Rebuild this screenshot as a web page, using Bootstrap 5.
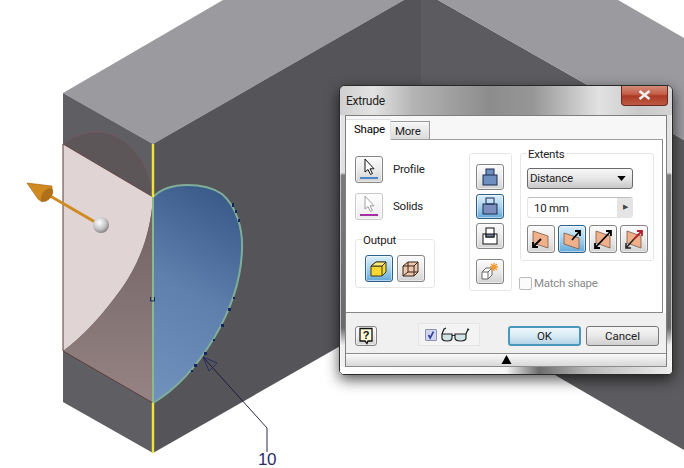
<!DOCTYPE html>
<html lang="en">
<head>
  <meta charset="UTF-8">
  <meta name="viewport" content="width=device-width, initial-scale=1.0">
  <title>Extrude</title>
  <link href="https://cdn.jsdelivr.net/npm/bootstrap@5.3.2/dist/css/bootstrap.min.css" rel="stylesheet">
  <style>
    body { margin: 0; background: #fff; overflow: hidden; width: 684px; height: 468px; font-family: Roboto, "Liberation Sans", sans-serif; font-size: 11.5px; letter-spacing: -.25px; color: #222; }
    .scene { position: absolute; left: 0; top: 0; }
    .win { position: absolute; left: 339px; top: 85px; width: 334px; height: 290px; border: 1px solid #2a2a2a; border-radius: 6px 6px 5px 5px; box-shadow: 0 5px 14px rgba(0,0,0,.65), inset 0 0 0 1px rgba(255,255,255,.55); background: linear-gradient(180deg, #e4e4e4 0, #e0e0e0 30%, #7b7b7b 31%, #6a6a6a 84%, #efefef 90%, #f2f2f2 100%); overflow: hidden; }
    .win-title { height: 29px; padding-left: 6px; font-size: 12px; background: linear-gradient(90deg, #cfcfcf 0, #e3e3e3 10%, #b4b4b4 22%, #8c8c8c 45%, #969696 58%, #e2e2e2 78%, #c9c9c9 90%, #d4d4d4 100%); }
    .win-close { width: 47px; height: 21px; margin: -1px 4px 0 0; padding: 0; border: 1px solid #6b2a20; border-top: 0; border-radius: 0 0 4px 4px; background: linear-gradient(180deg, #d4907c 0, #c4604a 45%, #ac3a26 55%, #bd5a44 100%); line-height: 1; }
    .win-client { margin: 0 5px; height: 252px; border: 1px solid #7f7f7f; border-bottom: 0; background: #fff; }
    .dlg-tabs { height: 23px; padding-top: 3px; border: 0; background: #f7f7f7; }
    .dlg-tabs .nav-link { height: 21px; padding: 0 0 0 8px; width: 45px; margin: 0; border: 1px solid #9b9b9b; border-bottom: 0; border-left: 0; border-radius: 0; color: #222; line-height: 19px; background: #fff; position: relative; z-index: 1; }
    .dlg-tabs .nav-link.other { width: 39px; height: 18px; margin-top: 2px; padding-left: 4px; background: linear-gradient(180deg, #f6f6f6, #dcdcdc); line-height: 18px; }
    .dlg-panel { height: 174px; padding: 13px 0 0 9px; border-top: 1px solid #9f9f9f; border-right: 1px solid #888; border-bottom: 1px solid #888; margin-right: 3px; background: #fff; }
    .col-a { width: 114px; padding-top: 3px; }
    .col-b { width: 43px; padding: 10px 0 6px 6px; height: 138px; margin-right: 8px; border: 1px solid #e6e6e6; border-radius: 3px; }
    .col-c { width: 134px; }
    .grp { border: 1px solid #e6e6e6; border-radius: 3px; }
    .grp-name { display: block; width: fit-content; height: 16px; margin-top: -8px; padding: 0 1px; line-height: 16px; background: #fff; color: #222; }
    .tool { display: flex; align-items: center; justify-content: center; width: 28px; height: 26px; padding: 0; border: 1px solid #858585; border-radius: 3px; background: linear-gradient(180deg, #fbfbfb 0, #e9e9e9 55%, #d2d2d2 100%); box-shadow: inset 0 0 0 1px rgba(255,255,255,.5); }
    .tool.on { border-color: #2f5f86; background: linear-gradient(180deg, #dbeefa 0, #a9d2ec 50%, #62a9d9 100%); }
    .tool.faded { border-color: #c9c9c9; background: linear-gradient(180deg, #fff, #ececec); }
    .tool.tall { height: 27px; }
    .new-solid { margin-top: 10px; }
    .pick-row { height: 27px; gap: 10px; }
    .pick-row + .pick-row { margin-top: 10px; }
    .grp-out { width: 80px; height: 49px; margin-top: 19px; padding-left: 9px; }
    .grp-out .grp-name { margin-left: -3px; }
    .out-row { margin-top: 7px; }
    .grp-ext { height: 108px; padding-left: 6px; }
    .dlg-select { width: 106px; height: 21px; margin-top: 6px; padding: 0 0 0 2px; border: 1px solid #6b6b6b; border-radius: 3px; font-size: 11.5px; letter-spacing: -.25px; color: #222; box-shadow: none; background-color: #ddd; background-image: url("data:image/svg+xml,%3csvg xmlns='http://www.w3.org/2000/svg' viewBox='0 0 10 6'%3e%3cpath fill='%23000' d='M0 0h10L5 6z'/%3e%3c/svg%3e"), linear-gradient(180deg, #f8f8f8 0, #e6e6e6 50%, #c8c8c8 100%); background-repeat: no-repeat; background-position: right 6px center, 0 0; background-size: 9px 5px, 100% 100%; }
    .dlg-num { width: 106px; height: 21px; margin-top: 8px; border-top: 1px solid #bdbdbd; border-bottom: 1px solid #e4e4e4; border-left: 1px solid #e4e4e4; border-radius: 3px; }
    .dlg-num input { height: 19px; min-height: 0; padding: 0 0 0 6px; border: 0; font-size: 11.5px; letter-spacing: -.25px; color: #222; background: #fff; box-shadow: none; }
    .dlg-num .spin { width: 16px; padding: 0; border: 0; border-radius: 0 3px 3px 0; background: #e4e4e4; color: #444; font-size: 7px; line-height: 19px; }
    .ext-row { gap: 3px; margin-top: 7px; }
    .ext-row .tool { width: 28px; height: 28px; }
    .match { margin: 16px 0 0 -1px; height: 13px; color: #8a8a8a; gap: 2px; line-height: 13px; }
    .match-box { width: 13px; height: 13px; border: 1px solid #bcbcbc; border-radius: 2px; background: #fbfbfb; margin: 0; }
    .dlg-foot { height: 40px; padding: 13px 0 0 9px; background: #f0f0f0; }
    .help-btn { width: 22px; height: 20px; }
    .view-grp { width: 62px; height: 23px; margin: -3px 0 0 41px; padding-left: 6px; border: 1px solid #e5e5e5; background: #f3f3f3; gap: 4px; }
    .view-grp .form-check-input { width: 12px; height: 12px; margin: 0; border: 1px solid #8b93b0; border-radius: 1px; background-color: #cfd6ee; box-shadow: none; background-image: url("data:image/svg+xml,%3csvg xmlns='http://www.w3.org/2000/svg' viewBox='0 0 12 12'%3e%3cpath fill='none' stroke='%23343f9a' stroke-width='2' d='M3 6l2 3.5L9 2'/%3e%3c/svg%3e"); }
    .cmd { width: 73px; height: 20px; padding: 0; border: 1px solid #777; border-radius: 3px; font-size: 11.5px; line-height: 18px; color: #222; background: linear-gradient(180deg, #f6f6f6 0, #e8e8e8 50%, #cfcfcf 100%); }
    .cmd.main { margin-left: 28px; border: 2px solid #4b97bb; line-height: 16px; background: linear-gradient(180deg, #edf6fb 0, #d8eaf4 50%, #b4d4e6 100%); }
    .cmd.other { margin-left: 5px; }
    .dlg-strip { height: 14px; border-top: 1px solid #8d8d8d; border-bottom: 1px solid #8d8d8d; background: linear-gradient(180deg, #fafafa, #d8d8d8); }
    .win-foot { height: 8px; background: linear-gradient(90deg, #fff 0, #f5f5f5 50%, #6c6c6c 60%, #bbb 75%, #eee 100%); }
  </style>
</head>
<body>
  <!-- part model behind the dialog -->
  <svg class="scene" width="684" height="468" viewBox="0 0 684 468">
    <defs>
      <linearGradient id="blueFace" x1="0.55" y1="0" x2="0.3" y2="1">
        <stop offset="0" stop-color="#3b5c8b"/><stop offset="0.5" stop-color="#5f80ad"/><stop offset="1" stop-color="#6e90bb"/>
      </linearGradient>
      <linearGradient id="cutFace" x1="0" y1="0" x2="0" y2="1">
        <stop offset="0" stop-color="#6f6062"/><stop offset="1" stop-color="#968484"/>
      </linearGradient>
      <radialGradient id="ball" cx="0.4" cy="0.35" r="0.7">
        <stop offset="0" stop-color="#fff"/><stop offset="0.6" stop-color="#c4c4c6"/><stop offset="1" stop-color="#77777a"/>
      </radialGradient>
    </defs>
    <polygon points="63,93 223,0 404,0 153,144" fill="#9a9a9f"/>
    <polygon points="63,93 153,144 153,453 63,402" fill="#5f5f63"/>
    <polygon points="153,144 404,0 421,0 421,300 153,453" fill="#545459"/>
    <polygon points="421,0 438,0 684,140 684,450 555,375 421,297" fill="#5c5c60"/>
    <polygon points="438,0 618,0 684,38 684,140" fill="#9a9a9f"/>
    <!-- cut profile -->
    <path d="M63 144C75 134 88 132 100 132C125 133 150 160 153 197Z" fill="#5d5658" stroke="#6e5a5a" stroke-width="1"/>
    <path d="M63 144L153 197C151 232 140 262 122 288C104 313 84 336 63 351Z" fill="#e1d4d4"/>
    <path d="M153 197C151 232 140 262 122 288C104 313 84 336 63 351L153 403Z" fill="url(#cutFace)"/>
    <path d="M63 144V351L153 403" fill="none" stroke="#5d3b3b" stroke-width="1"/>
    <path d="M63 144L153 197" fill="none" stroke="#5d3b3b" stroke-width="0.8"/>
    <path d="M153 197C160 190 172 185 187 185C200 185 212 187 222 194C236 206 243 228 242 250C241 280 232 308 214 338C197 366 175 390 153 403Z" fill="url(#blueFace)" stroke="#7fae98" stroke-width="2"/>
    <path d="M153 197V403" stroke="#8aba8c" stroke-width="2"/>
    <path d="M153 144V197M153 403V453" stroke="#f2e338" stroke-width="2.4"/>
    <!-- little marks along the profile -->
    <g fill="#14245c">
      <path d="M150.500 297V301H154.500V297" fill="none" stroke="#14245c"/>
      <rect x="232" y="203" width="2" height="4"/><rect x="235" y="210" width="2" height="3"/><rect x="238" y="219" width="2" height="3"/>
      <rect x="233" y="297" width="2" height="2"/><rect x="228" y="308" width="3" height="3"/><rect x="221" y="324" width="3" height="3"/><rect x="213" y="339" width="2" height="2"/><rect x="204" y="352" width="3" height="3"/><rect x="194" y="364" width="3" height="3"/><rect x="191" y="370" width="2" height="2"/>
    </g>
    <!-- direction arrow -->
    <path d="M45 193L95 222" stroke="#d08a20" stroke-width="3"/>
    <path d="M27 183L52 186L52 192L42 202L38 199Z" fill="#d08a20" stroke="#9c5f10" stroke-width="0.6"/>
    <ellipse cx="47" cy="195" rx="4.500" ry="8" transform="rotate(40 47 195)" fill="#b0701a"/>
    <circle cx="101" cy="225" r="8" fill="url(#ball)"/>
    <!-- leader and balloon -->
    <path d="M203 357L267 428V452" fill="none" stroke="#15153a" stroke-width="0.9"/>
    <path d="M203 357L217 363M203 357L209 371M209 371L217 363" fill="none" stroke="#1f2a6b" stroke-width="0.9"/>
    <text x="258" y="465" font-family="Liberation Sans, sans-serif" font-size="17" letter-spacing="-.5" fill="#2d2d6e">10</text>
  </svg>

  <div class="win">
    <div class="win-title d-flex align-items-center justify-content-between">
      <span>Extrude</span>
      <button class="win-close d-flex align-items-center justify-content-center align-self-start" type="button" aria-label="Close">
        <svg width="13" height="10" viewBox="0 0 13 10"><path d="M1.500 1l10 8M11.500 1l-10 8" stroke="#eee" stroke-width="2.600"/></svg>
      </button>
    </div>
    <div class="win-client">
      <ul class="nav nav-tabs dlg-tabs">
        <li class="nav-item"><a class="nav-link active" href="#">Shape</a></li>
        <li class="nav-item"><a class="nav-link other" href="#">More</a></li>
      </ul>
      <div class="dlg-panel d-flex align-items-start">
        <div class="col-a">
          <div class="d-flex align-items-center pick-row">
            <button class="tool tall" type="button" aria-label="Profile">
              <svg width="22" height="23" viewBox="0 0 22 23"><path d="M7 1V14L10 11.500L12.500 16.500L14.500 15.500L12 10.800H16Z" fill="#fff" stroke="#111" stroke-width="1"/><rect x="2" y="19" width="18" height="2" fill="#4a86c8"/></svg>
            </button>
            <span>Profile</span>
          </div>
          <div class="d-flex align-items-center pick-row">
            <button class="tool tall faded" type="button" aria-label="Solids">
              <svg width="22" height="23" viewBox="0 0 22 23"><path d="M7 1V14L10 11.500L12.500 16.500L14.500 15.500L12 10.800H16Z" fill="#fff" stroke="#a0a0a0" stroke-width="1"/><rect x="2" y="19" width="18" height="2" fill="#a72ea0"/></svg>
            </button>
            <span>Solids</span>
          </div>
          <div class="grp grp-out">
            <span class="grp-name">Output</span>
            <div class="d-flex gap-1 out-row">
              <button class="tool tall on" type="button" aria-label="Solid">
                <svg width="20" height="20" viewBox="0 0 20 20"><path d="M2 7L7 3H17V13L13 17H2Z" fill="#f7d730" stroke="#3a3a20" stroke-width="1"/><path d="M2 7H13V17M13 7L17 3" fill="none" stroke="#3a3a20" stroke-width="1"/><path d="M2 7L7 3H17L13 7Z" fill="#fbe97a" stroke="#3a3a20" stroke-width="1"/></svg>
              </button>
              <button class="tool tall" type="button" aria-label="Surface">
                <svg width="20" height="20" viewBox="0 0 20 20"><path d="M2 7L7 3H17V13L13 17H2Z" fill="#ecc6ad" stroke="#3a2418" stroke-width="1"/><path d="M2 7H13V17M13 7L17 3M7 3V13H17M7 13L2 17" fill="none" stroke="#3a2418" stroke-width="1"/></svg>
              </button>
            </div>
          </div>
        </div>
        <div class="col-b d-flex flex-column">
          <button class="tool" type="button" aria-label="Join">
            <svg width="18" height="20" viewBox="0 0 18 20"><rect x="5" y="2" width="8" height="9" fill="#6f8fbe" stroke="#1c2c55"/><rect x="2" y="8" width="14" height="10" fill="#6f8fbe" stroke="#1c2c55"/></svg>
          </button>
          <button class="tool on mt-1" type="button" aria-label="Cut">
            <svg width="18" height="20" viewBox="0 0 18 20"><rect x="5" y="2" width="8" height="9" fill="none" stroke="#1c2c55"/><rect x="2" y="8" width="14" height="10" fill="#7c8ebb" stroke="#1c2c55"/><path d="M5 8H13" stroke="#1c2c55"/></svg>
          </button>
          <button class="tool mt-1" type="button" aria-label="Intersect">
            <svg width="18" height="20" viewBox="0 0 18 20"><rect x="2" y="8" width="14" height="10" fill="#fff" stroke="#111"/><rect x="5" y="2" width="8" height="9" fill="#fff" stroke="#111"/><rect x="5" y="8" width="8" height="3" fill="#6a7a9a" stroke="#111"/></svg>
          </button>
          <button class="tool new-solid" type="button" aria-label="New solid">
            <svg width="20" height="20" viewBox="0 0 20 20"><path d="M2 11L6 7H12V14L8 18H2ZM2 11H8V18M8 11L12 7" fill="#fff" stroke="#666"/><path d="M14 2V10M10 6H18M11 3L17 9M17 3L11 9" stroke="#ef9a2e" stroke-width="1.400"/></svg>
          </button>
        </div>
        <div class="col-c">
          <div class="grp grp-ext">
            <span class="grp-name">Extents</span>
            <select class="form-select dlg-select" aria-label="Extents">
              <option>Distance</option>
            </select>
            <div class="input-group flex-nowrap dlg-num">
              <input class="form-control" type="text" value="10 mm" aria-label="Distance value">
              <button class="btn spin" type="button" aria-label="More">&#9654;</button>
            </div>
            <div class="d-flex ext-row">
              <button class="tool" type="button" aria-label="Direction 1">
                <svg width="22" height="22" viewBox="0 0 22 22"><path d="M3 3L18 8V20L3 15Z" fill="#f0b08a" stroke="#7a5a48" stroke-width="0.8"/><path d="M11 11L3 19M3 14V19H8" fill="none" stroke="#000" stroke-width="1.800"/></svg>
              </button>
              <button class="tool on" type="button" aria-label="Direction 2">
                <svg width="22" height="22" viewBox="0 0 22 22"><path d="M3 5L18 10V21L3 16Z" fill="#f0b08a" stroke="#7a5a48" stroke-width="0.8"/><path d="M11 12L19 3M14 3H19V8" fill="none" stroke="#000" stroke-width="1.800"/></svg>
              </button>
              <button class="tool" type="button" aria-label="Symmetric">
                <svg width="22" height="22" viewBox="0 0 22 22"><path d="M4 3L18 8V20L4 15Z" fill="#f0b08a" stroke="#7a5a48" stroke-width="0.8"/><path d="M3 20L19 3M14 3H19V8M3 15V20H8" fill="none" stroke="#000" stroke-width="1.800"/></svg>
              </button>
              <button class="tool" type="button" aria-label="Asymmetric">
                <svg width="22" height="22" viewBox="0 0 22 22"><path d="M4 3L18 8V20L4 15Z" fill="#f0b08a" stroke="#7a5a48" stroke-width="0.8"/><path d="M3 20L11 11M3 15V20H8" fill="none" stroke="#222" stroke-width="1.500"/><path d="M11 11L19 3M14 3H19V8" fill="none" stroke="#b3202a" stroke-width="1.800"/></svg>
              </button>
            </div>
          </div>
          <div class="d-flex align-items-center match">
            <span class="match-box"></span>
            <span>Match shape</span>
          </div>
        </div>
      </div>
      <div class="dlg-foot d-flex align-items-start">
        <button class="tool help-btn" type="button" aria-label="Help">
          <svg width="18" height="18" viewBox="0 0 18 18"><path d="M3 1.500H15V14H11L10 16.500L8 14H3Z" fill="#fbfbd8" stroke="#111" stroke-width="1.300"/><text x="9" y="12" text-anchor="middle" font-family="Liberation Sans, sans-serif" font-size="11" font-weight="700" fill="#111">?</text></svg>
        </button>
        <div class="view-grp d-flex align-items-center">
          <input class="form-check-input" type="checkbox" checked aria-label="Preview">
          <svg width="29" height="15" viewBox="0 0 29 15"><path d="M1 7H11V11C11 13 9 14 6 14C3 14 1 13 1 11ZM14 7H25V11C25 13 23 14 19.500 14C16 14 14 13 14 11ZM11 8.500H14M25 7L27 2L28 3M1 7L3 2L5 1" fill="#cfe3e6" stroke="#222" stroke-width="1.200"/></svg>
        </div>
        <button class="btn cmd main" type="button">OK</button>
        <button class="btn cmd other" type="button">Cancel</button>
      </div>
      <div class="dlg-strip d-flex justify-content-center">
        <svg width="11" height="10" viewBox="0 0 11 10"><path d="M5.500 1L10.500 10H0.500Z" fill="#000"/></svg>
      </div>
    </div>
    <div class="win-foot"></div>
  </div>
</body>
</html>
